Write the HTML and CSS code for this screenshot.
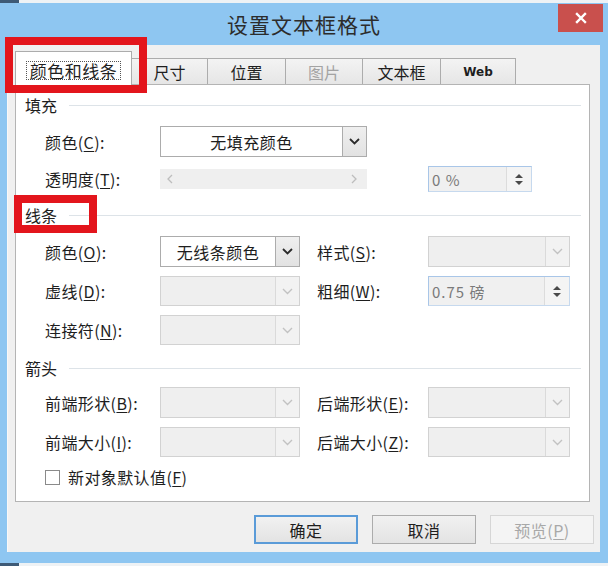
FILE: index.html
```html
<!DOCTYPE html>
<html lang="zh-CN">
<head>
<meta charset="utf-8">
<title>设置文本框格式</title>
<link rel="stylesheet" href="styles.css">
</head>
<body>
<div class="window">
  <div class="edge"></div>
  <div class="titlebar">
    <div class="title">设置文本框格式</div>
    <div class="close"><svg width="12" height="12" viewBox="0 0 12 12"><path d="M2 2 L10 10 M10 2 L2 10" stroke="#fff" stroke-width="2.4" stroke-linecap="square"/></svg></div>
  </div>
  <div class="client">
    <div class="tabs">
      <div class="tab active"><span class="focus">颜色和线条</span></div>
      <div class="tab t-size">尺寸</div>
      <div class="tab t-pos">位置</div>
      <div class="tab t-pic disabled">图片</div>
      <div class="tab t-box">文本框</div>
      <div class="tab t-web web">Web</div>
    </div>
    <div class="panel">
      <div class="group g1"><span>填充</span><i></i></div>
      <div class="row wide r-a">
        <label>颜色(<u>C</u>):</label>
        <div class="combo on"><span class="val center">无填充颜色</span><span class="arrow"><svg width="11" height="7" viewBox="0 0 11 7"><path d="M1 1 L5.5 5.5 L10 1" fill="none" stroke="#2b2b2b" stroke-width="1.8"/></svg></span></div>
      </div>
      <div class="row wide r-b">
        <label>透明度(<u>T</u>):</label>
        <div class="slider"><svg width="6" height="10" viewBox="0 0 6 10"><path d="M5 1 L1 5 L5 9" fill="none" stroke="#bdbdbd" stroke-width="1.3"/></svg><svg width="6" height="10" viewBox="0 0 6 10"><path d="M1 1 L5 5 L1 9" fill="none" stroke="#bdbdbd" stroke-width="1.3"/></svg></div>
        <span></span>
        <div class="spin short"><span class="val">0 %</span><span class="spinbtn"><b class="up"></b><b class="down"></b></span></div>
      </div>

      <div class="group g2"><span>线条</span><i></i></div>
      <div class="row two r-c">
        <label>颜色(<u>O</u>):</label>
        <div class="combo on"><span class="val center">无线条颜色</span><span class="arrow"><svg width="11" height="7" viewBox="0 0 11 7"><path d="M1 1 L5.5 5.5 L10 1" fill="none" stroke="#2b2b2b" stroke-width="1.8"/></svg></span></div>
        <span></span>
        <label>样式(<u>S</u>):</label>
        <div class="combo off"><span class="val"></span><span class="arrow"><svg width="11" height="7" viewBox="0 0 11 7"><path d="M1 1 L5.5 5.5 L10 1" fill="none" stroke="#c2c2c2" stroke-width="1.4"/></svg></span></div>
      </div>
      <div class="row two r-d">
        <label>虚线(<u>D</u>):</label>
        <div class="combo off"><span class="val"></span><span class="arrow"><svg width="11" height="7" viewBox="0 0 11 7"><path d="M1 1 L5.5 5.5 L10 1" fill="none" stroke="#c2c2c2" stroke-width="1.4"/></svg></span></div>
        <span></span>
        <label>粗细(<u>W</u>):</label>
        <div class="spin"><span class="val">0.75 磅</span><span class="spinbtn"><b class="up"></b><b class="down"></b></span></div>
      </div>
      <div class="row two r-e">
        <label>连接符(<u>N</u>):</label>
        <div class="combo off"><span class="val"></span><span class="arrow"><svg width="11" height="7" viewBox="0 0 11 7"><path d="M1 1 L5.5 5.5 L10 1" fill="none" stroke="#c2c2c2" stroke-width="1.4"/></svg></span></div>
      </div>

      <div class="group g3"><span>箭头</span><i></i></div>
      <div class="row two r-f">
        <label>前端形状(<u>B</u>):</label>
        <div class="combo off"><span class="val"></span><span class="arrow"><svg width="11" height="7" viewBox="0 0 11 7"><path d="M1 1 L5.5 5.5 L10 1" fill="none" stroke="#c2c2c2" stroke-width="1.4"/></svg></span></div>
        <span></span>
        <label>后端形状(<u>E</u>):</label>
        <div class="combo off"><span class="val"></span><span class="arrow"><svg width="11" height="7" viewBox="0 0 11 7"><path d="M1 1 L5.5 5.5 L10 1" fill="none" stroke="#c2c2c2" stroke-width="1.4"/></svg></span></div>
      </div>
      <div class="row two r-g">
        <label>前端大小(<u>I</u>):</label>
        <div class="combo off"><span class="val"></span><span class="arrow"><svg width="11" height="7" viewBox="0 0 11 7"><path d="M1 1 L5.5 5.5 L10 1" fill="none" stroke="#c2c2c2" stroke-width="1.4"/></svg></span></div>
        <span></span>
        <label>后端大小(<u>Z</u>):</label>
        <div class="combo off"><span class="val"></span><span class="arrow"><svg width="11" height="7" viewBox="0 0 11 7"><path d="M1 1 L5.5 5.5 L10 1" fill="none" stroke="#c2c2c2" stroke-width="1.4"/></svg></span></div>
      </div>
      <div class="check">
        <span class="box"></span>
        <span class="ctext">新对象默认值(<u>F</u>)</span>
      </div>
    </div>
    <div class="buttons">
      <div class="btn default">确定</div>
      <div class="btn">取消</div>
      <div class="btn disabled">预览(<u>P</u>)</div>
    </div>
  </div>
  <div class="edge bottom"></div>
  <div class="mark mark1"></div>
  <div class="mark mark2"></div>
</div>
</body>
</html>
```

FILE: styles.css
```css
* { box-sizing: border-box; margin: 0; padding: 0; }
html, body { width: 608px; height: 566px; overflow: hidden; }
body {
  font-family: "Noto Sans CJK SC", "Noto Sans", sans-serif;
  font-size: 16px;
  color: #1e1e1e;
  background: #8ec6f1;
}
u { text-decoration: underline; text-underline-offset: 2px; }

.window {
  position: relative;
  width: 608px;
  height: 566px;
  background: #8ec6f1;
  display: flex;
  flex-direction: column;
}
.edge {
  height: 3px;
  flex: none;
  background: linear-gradient(to right, #3e5a76 0 19px, #eef2f5 19px);
}
.edge.bottom { margin-top: auto; }

.titlebar {
  height: 42px;
  flex: none;
  display: grid;
  grid-template-columns: 1fr auto 1fr;
  align-items: start;
}
.title {
  grid-column: 2;
  margin-top: 11px;
  font-size: 21px;
  line-height: 21px;
  letter-spacing: 1px;
  color: #2c2c2c;
}
.close {
  grid-column: 3;
  justify-self: end;
  margin-top: 1px;
  margin-right: 5px;
  width: 45px;
  height: 28px;
  background: #c9504d;
  display: flex;
  align-items: center;
  justify-content: center;
}

.client {
  flex: none;
  margin-left: 7px;
  width: 593px;
  height: 507px;
  background: #f0f0f0;
  border-left: 1px solid #f8f8f8;
  display: flex;
  flex-direction: column;
}

/* tabs */
.tabs {
  height: 39px;
  flex: none;
  display: flex;
  align-items: flex-end;
  padding-left: 7px;
}
.tab {
  height: 26px;
  border: 1px solid #acacac;
  border-bottom: none;
  background: linear-gradient(#f3f3f3, #e6e6e6);
  display: flex;
  align-items: center;
  justify-content: center;
  font-size: 16px;
  margin-left: -1px;
}
.tab.active {
  position: relative;
  z-index: 2;
  height: 34px;
  width: 117px;
  margin-left: 0;
  margin-bottom: -1px;
  background: #fff;
  padding-top: 3px;
}
.focus {
  border: 1px dotted #555;
  padding: 0 3px;
  line-height: 17px;
  font-size: 17px;
  letter-spacing: 0.5px;
}
.t-size { width: 77px; }
.t-pos { width: 79px; }
.t-pic { width: 78px; }
.t-box { width: 79px; }
.t-web { width: 76px; }
.tab.disabled { color: #a3a3a3; }
.tab.web { font-family: "DejaVu Sans", sans-serif; font-weight: bold; font-size: 12px; }

/* panel */
.panel {
  flex: none;
  margin-left: 7px;
  width: 575px;
  height: 418px;
  background: #fff;
  border: 1px solid #b4b4b4;
  display: flex;
  flex-direction: column;
}
.group {
  height: 20px;
  display: flex;
  align-items: center;
  padding-left: 9px;
  padding-right: 8px;
  gap: 12px;
}
.group span { font-size: 16px; line-height: 20px; }
.group i { flex: 1; height: 1px; background: #dde3e8; margin-top: 1px; }
.g1 { margin-top: 10px; }
.g2 { margin-top: 13px; }
.g3 { margin-top: 13px; }

.row {
  display: grid;
  align-items: center;
  padding-left: 29px;
}
.row label { font-size: 16px; letter-spacing: 0.4px; white-space: nowrap; }
.row.wide { grid-template-columns: 115px 207px 61px 104px; }
.row.two { grid-template-columns: 115px 140px 17px 111px 142px; }
.r-a { margin-top: 11px; height: 31px; }
.r-b { margin-top: 9px; height: 26px; }
.r-c { margin-top: 11px; height: 31px; }
.r-d { margin-top: 9px; height: 30px; }
.r-e { margin-top: 9px; height: 30px; }
.r-f { margin-top: 9px; height: 31px; }
.r-g { margin-top: 9px; height: 30px; }

.combo {
  height: 100%;
  display: flex;
  border: 1px solid #acacac;
}
.combo .val {
  flex: 1;
  display: flex;
  align-items: center;
  font-size: 16px;
  letter-spacing: 0.5px;
}
.combo .val.center { justify-content: center; }
.combo .arrow {
  width: 24px;
  display: flex;
  align-items: center;
  justify-content: center;
  border-left: 1px solid #acacac;
}
.combo.on { background: #fff; }
.combo.on .arrow { background: linear-gradient(#efefef, #e2e2e2); }
.combo.off { background: #efefef; border-color: #d2d2d2; }
.combo.off .arrow { border-left-color: #dadada; background: #f2f2f2; }

.slider {
  height: 20px;
  background: #efefef;
  display: flex;
  align-items: center;
  justify-content: space-between;
  padding: 0 10px 0 7px;
}

.spin {
  height: 100%;
  display: flex;
  border: 1px solid #a9c6e8;
  border-right-color: #c6d9ee;
  border-bottom-color: #c6d9ee;
  background: #f0f0f0;
}
.spin .val {
  flex: 1;
  display: flex;
  align-items: center;
  padding-left: 3px;
  color: #7a7a7a;
  font-size: 15px;
  letter-spacing: 1px;
}
.spin .spinbtn {
  width: 25px;
  display: flex;
  flex-direction: column;
  align-items: center;
  justify-content: center;
  gap: 3px;
  background: #f4f4f4;
  border-left: 1px solid #dcdcdc;
}
.spinbtn b { display: block; width: 0; height: 0; border-left: 4px solid transparent; border-right: 4px solid transparent; }
.spinbtn .up { border-bottom: 4px solid #4a4a4a; }
.spinbtn .down { border-top: 4px solid #4a4a4a; }

.check {
  margin-top: 10px;
  height: 20px;
  display: flex;
  align-items: center;
  padding-left: 29px;
  gap: 8px;
}
.check .box { width: 15px; height: 15px; border: 1px solid #8a8a8a; background: #fff; }
.check .ctext { font-size: 16px; letter-spacing: 0.4px; }

/* buttons */
.buttons {
  margin-top: 13px;
  height: 29px;
  display: flex;
  justify-content: flex-end;
  gap: 14px;
  padding-right: 6px;
}
.btn {
  width: 104px;
  height: 29px;
  border: 1px solid #acacac;
  background: linear-gradient(#f1f1f1, #e3e3e3);
  display: flex;
  align-items: center;
  justify-content: center;
  font-size: 16px;
  letter-spacing: 0.5px;
}
.btn.default { border: 2px solid #5a9bd8; }
.btn.disabled { color: #a8a8a8; border-color: #d6d6d6; background: #f4f4f4; }

/* annotation marks */
.mark {
  position: absolute;
  border: 8px solid #e3151c;
  pointer-events: none;
}
.mark1 { left: 5px; top: 37px; width: 142px; height: 56px; }
.mark2 { left: 14px; top: 195px; width: 83px; height: 38px; }
```
